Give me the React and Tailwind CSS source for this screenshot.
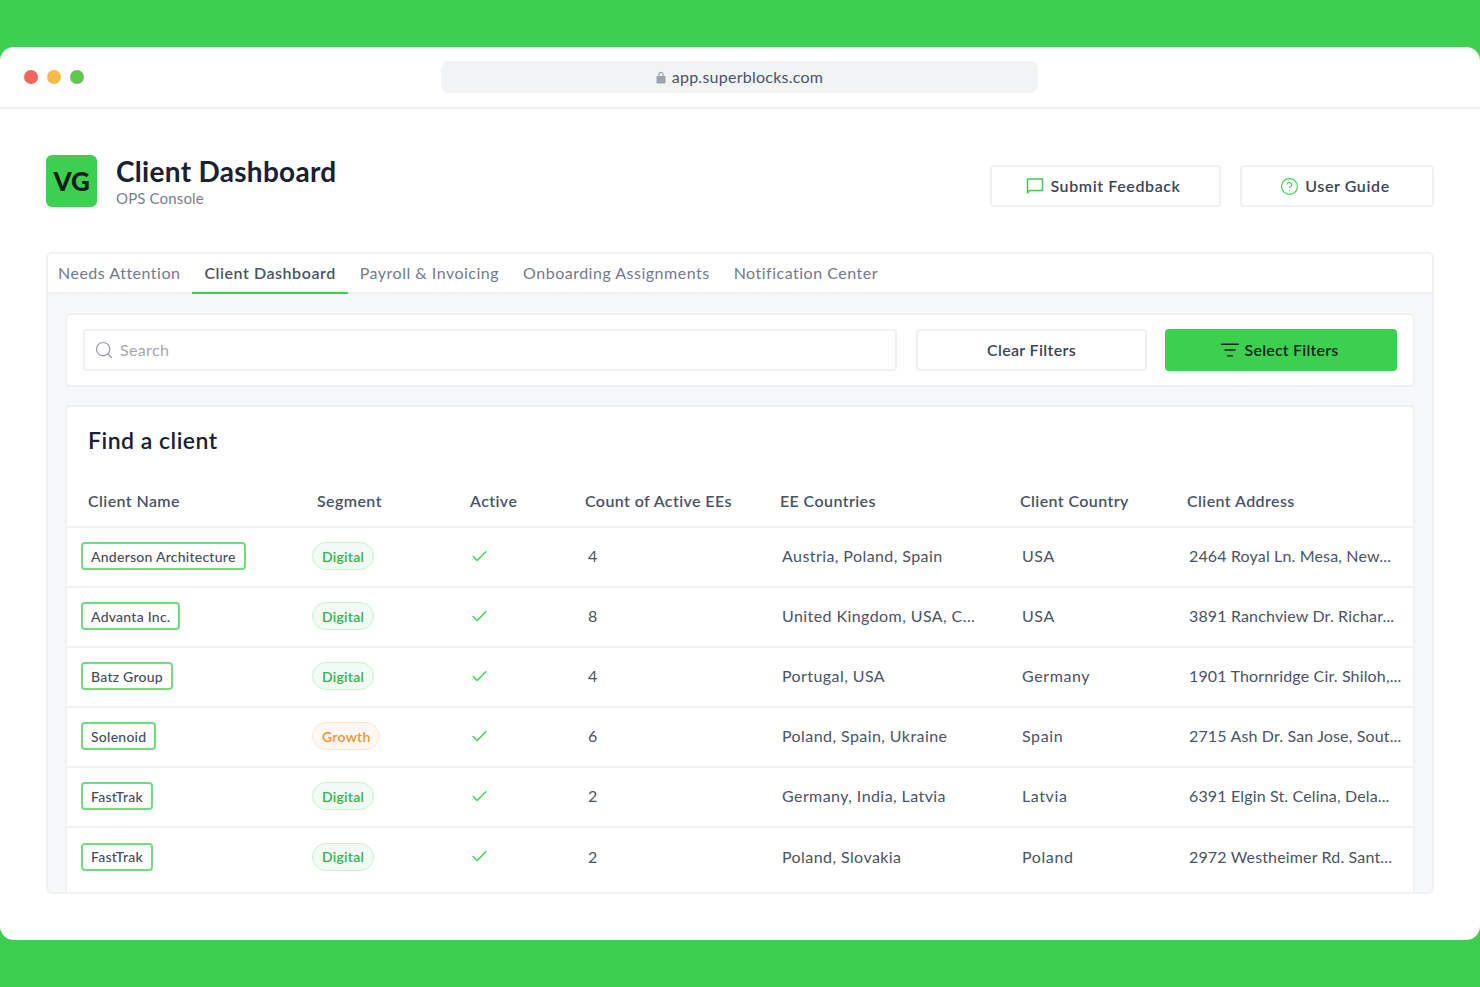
import { Check, CircleHelp, ListFilter, Search } from 'lucide-react';

const tabs = ['Needs Attention', 'Client Dashboard', 'Payroll & Invoicing', 'Onboarding Assignments', 'Notification Center'];

const columns = ['Client Name', 'Segment', 'Active', 'Count of Active EEs', 'EE Countries', 'Client Country', 'Client Address'];

const clients = [
  { name: 'Anderson Architecture', segment: 'Digital', count: 4, countries: 'Austria, Poland, Spain', country: 'USA', address: '2464 Royal Ln. Mesa, New...' },
  { name: 'Advanta Inc.', segment: 'Digital', count: 8, countries: 'United Kingdom, USA, C...', country: 'USA', address: '3891 Ranchview Dr. Richar...' },
  { name: 'Batz Group', segment: 'Digital', count: 4, countries: 'Portugal, USA', country: 'Germany', address: '1901 Thornridge Cir. Shiloh,...' },
  { name: 'Solenoid', segment: 'Growth', count: 6, countries: 'Poland, Spain, Ukraine', country: 'Spain', address: '2715 Ash Dr. San Jose, Sout...' },
  { name: 'FastTrak', segment: 'Digital', count: 2, countries: 'Germany, India, Latvia', country: 'Latvia', address: '6391 Elgin St. Celina, Dela...' },
  { name: 'FastTrak', segment: 'Digital', count: 2, countries: 'Poland, Slovakia', country: 'Poland', address: '2972 Westheimer Rd. Sant...' },
];

const rowGrid = 'grid grid-cols-[245px_158px_115px_195px_240px_167px_1fr] items-center';

function SegmentPill({ segment }) {
  if (segment === 'Growth') {
    return (
      <span className="inline-flex h-[28px] items-center rounded-full border border-[#fde3cc] bg-[#fff8f2] px-[9px] text-[14px] font-semibold tracking-[0.25px] text-[#f5922f]">
        {segment}
      </span>
    );
  }
  return (
    <span className="inline-flex h-[28px] items-center rounded-full border border-[#c9f1d0] bg-[#f1faf3] px-[9px] text-[14px] font-semibold tracking-[0.25px] text-[#38b04c]">
      {segment}
    </span>
  );
}

function ClientRow({ client }) {
  return (
    <div className={`${rowGrid} h-[60.1px] border-b-2 border-[#f1f2f4] pb-[2px] text-[16px] text-[#4b5365] last:border-b-transparent`}>
      <div className="pl-[14px]">
        <span className="inline-flex h-[28px] items-center rounded-[4px] border-2 border-[#6fdc80] bg-white px-[8px] text-[14px] font-medium tracking-[0.25px] text-[#454d60]">
          {client.name}
        </span>
      </div>
      <div><SegmentPill segment={client.segment} /></div>
      <div><Check className="h-[19px] w-[19px] text-[#3dd050]" strokeWidth={1.75} /></div>
      <div className="pl-[3px]">{client.count}</div>
      <div className="pl-[2px] tracking-[0.42px] whitespace-nowrap">{client.countries}</div>
      <div className="pl-[2px] tracking-[0.6px]">{client.country}</div>
      <div className="pl-[2px] tracking-[0.15px] whitespace-nowrap">{client.address}</div>
    </div>
  );
}

export default function App() {
  return (
    <div className="h-[987px] w-[1480px] overflow-hidden bg-[#3dd050] pt-[47px] font-['Lato',sans-serif]">
      <div className="h-[893px] rounded-[14px] bg-white">
        <div className="flex h-[62px] items-center border-b-2 border-[#eef0f1] pl-[24px]">
          <div className="flex gap-[9px]">
            <span className="h-[14px] w-[14px] rounded-full bg-[#f1675f]" />
            <span className="h-[14px] w-[14px] rounded-full bg-[#f5bb47]" />
            <span className="h-[14px] w-[14px] rounded-full bg-[#62c554]" />
          </div>
          <div className="ml-[357px] flex h-[32px] w-[597px] items-center justify-center gap-[6px] rounded-[8px] bg-[#f2f3f5] text-[16px] tracking-[0.25px] text-[#4b5365]">
            <svg width="10" height="13" viewBox="0 0 10 13" fill="#9ca3af">
              <path d="M2.4 5V3.4a2.6 2.6 0 0 1 5.2 0V5h.9c.5 0 1 .4 1 1v5.5c0 .6-.5 1-1 1h-7c-.5 0-1-.4-1-1V6c0-.6.5-1 1-1h.9zm1.2 0h2.8V3.4a1.4 1.4 0 0 0-2.8 0V5z" />
            </svg>
            app.superblocks.com
          </div>
        </div>

        <div className="px-[46px]">
          <div className="flex items-center justify-between pt-[45px]">
            <div className="flex items-center gap-[19px]">
              <div className="flex h-[52px] w-[51px] items-center justify-center rounded-[6px] bg-[#3dd050] text-[26px] font-black tracking-[-0.3px] text-[#0f1f17]">
                VG
              </div>
              <div>
                <h1 className="text-[28px] leading-[34px] font-bold tracking-[0.3px] text-[#1a2133]">Client Dashboard</h1>
                <p className="text-[15px] leading-[20px] tracking-[0.15px] text-[#79808f]">OPS Console</p>
              </div>
            </div>
            <div className="mt-[10px] flex gap-[19px]">
              <button className="flex h-[42px] w-[231px] items-center justify-center gap-[6px] rounded-[4px] border-2 border-[#f0f1f3] pr-[4px] text-[16px] font-semibold tracking-[0.6px] text-[#3d4558]">
                <svg width="18" height="18" viewBox="0 0 18 18" fill="none" stroke="#3dd050" strokeWidth="1.5">
                  <path d="M1.5 16V2h15v11.5H3.4z" strokeLinejoin="round" />
                </svg>
                Submit Feedback
              </button>
              <button className="flex h-[42px] w-[194px] items-center justify-center gap-[6px] rounded-[4px] border-2 border-[#f0f1f3] pr-[4px] text-[16px] font-semibold tracking-[0.6px] text-[#3d4558]">
                <CircleHelp className="h-[19px] w-[19px] text-[#3dd050]" strokeWidth={1.5} />
                User Guide
              </button>
            </div>
          </div>

          <div className="mt-[44px] h-[642px] overflow-hidden rounded-[6px] border-2 border-[#f1f2f4] bg-[#f7f8fa]">
            <div className="flex h-[40px] items-stretch border-b-2 border-[#eef0f2] bg-white text-[16px] tracking-[0.5px] text-[#737a8a]">
              {tabs.map((tab, i) => (
                <div
                  key={tab}
                  className={i === 1
                    ? 'flex h-[40px] items-center border-b-2 border-[#3dd050] px-[12px] font-semibold tracking-[0.55px] text-[#4b5365]'
                    : 'flex items-center px-[12px] first:pl-[10px]'}
                >
                  {tab}
                </div>
              ))}
            </div>

            <div className="px-[17px] pt-[19px]">
              <div className="flex h-[74px] items-center rounded-[6px] border-2 border-[#f0f1f3] bg-white pl-[16px] pr-[16px]">
                <div className="flex h-[42px] w-[814px] items-center gap-[6px] rounded-[4px] border-2 border-[#f0f1f3] pl-[9px] text-[16px] tracking-[0.35px] text-[#a2a7b2]">
                  <Search className="h-[20px] w-[20px] text-[#9096a3]" strokeWidth={1.4} />
                  Search
                </div>
                <button className="ml-[19px] h-[42px] w-[231px] rounded-[4px] border-2 border-[#f0f1f3] text-[16px] font-semibold tracking-[0.35px] text-[#3d4558]">
                  Clear Filters
                </button>
                <button className="ml-[18px] flex h-[42px] w-[232px] items-center justify-center gap-[5px] rounded-[4px] bg-[#3dd050] pr-[4px] text-[16px] font-semibold tracking-[0.2px] text-[#14241a]">
                  <ListFilter className="h-[20px] w-[20px]" strokeWidth={1.7} />
                  Select Filters
                </button>
              </div>

              <div className="mt-[18px] rounded-[6px] border-2 border-[#f0f1f3] bg-white pb-[10px]">
                <h2 className="pl-[21px] pt-[19px] text-[23px] leading-[28px] font-semibold tracking-[0.5px] text-[#1a2133]">Find a client</h2>
                <div className={`${rowGrid} mt-[26px] h-[48px] border-b-2 border-[#f1f2f4] pb-[4px] text-[16px] font-semibold tracking-[0.4px] text-[#4b5365]`}>
                  {columns.map((col, i) => (
                    <div key={col} className={i === 0 ? 'pl-[21px]' : i === 1 ? 'pl-[5px]' : ''}>{col}</div>
                  ))}
                </div>
                <div>
                  {clients.map((client, i) => (
                    <ClientRow key={i} client={client} />
                  ))}
                </div>
              </div>
            </div>
          </div>
        </div>
      </div>
    </div>
  );
}
